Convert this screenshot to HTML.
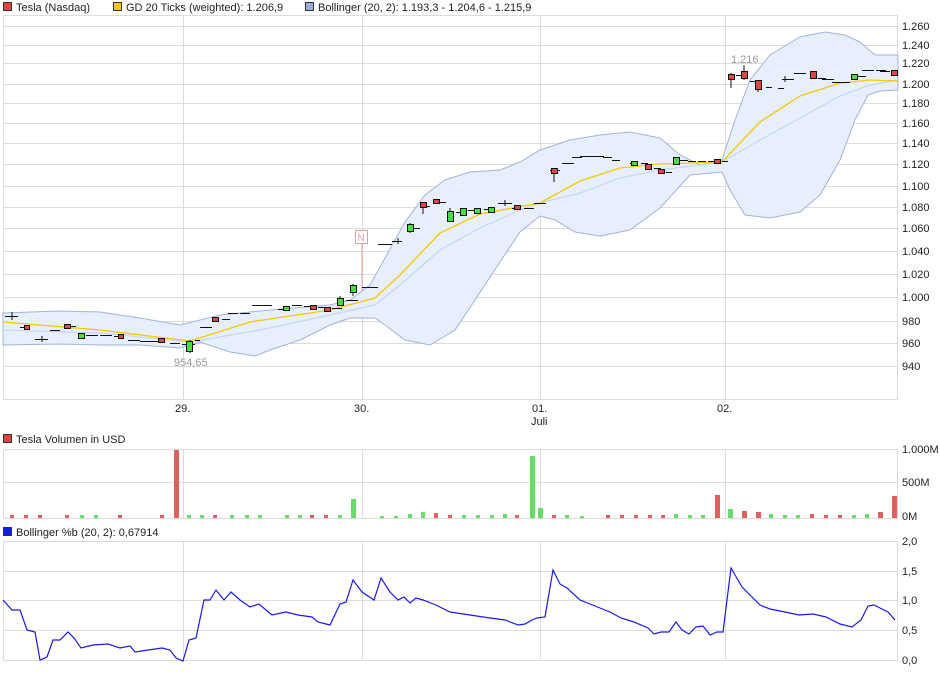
<!DOCTYPE html>
<html><head><meta charset="utf-8"><style>
body{margin:0;background:#fff;width:940px;height:670px;overflow:hidden;font-family:"Liberation Sans",sans-serif}
svg text{font-family:"Liberation Sans",sans-serif;font-size:11px;fill:#222}
</style></head><body>
<svg width="940" height="670" xmlns="http://www.w3.org/2000/svg">
<rect x="3.5" y="2.5" width="8" height="8" fill="#e04545" stroke="#333"/><text x="16" y="11">Tesla (Nasdaq)</text>
<rect x="113.5" y="2.5" width="8" height="8" fill="#f5c800" stroke="#333"/><text x="126" y="11">GD 20 Ticks (weighted): 1.206,9</text>
<rect x="305.5" y="2.5" width="8" height="8" fill="#97aedd" stroke="#333"/><text x="318" y="11">Bollinger (20, 2): 1.193,3 - 1.204,6 - 1.215,9</text>
<g stroke="#dcdcdc" stroke-width="1" fill="none">
<path d="M3 26.5H898M3 45.5H898M3 63.5H898M3 84.5H898M3 103.5H898M3 123.5H898M3 143.5H898M3 164.5H898M3 186.5H898M3 207.5H898M3 228.5H898M3 251.5H898M3 274.5H898M3 297.5H898M3 321.5H898M3 343.5H898M3 366.5H898"/>
<path d="M183.5 15V400M362.5 15V400M540.5 15V400M725.5 15V400"/>
<rect x="3.5" y="15.5" width="894" height="384"/>
</g>
<path d="M3 313 L60 311 L100 312 L140 318 L180 325 L220 315 L270 310 L330 305 L350 300 L370 285 L385 258 L405 222 L425 195 L445 180 L470 172 L500 170 L520 162 L540 150 L570 140 L600 135 L630 132 L660 138 L680 155 L700 165 L722 160 L735 120 L750 80 L770 55 L800 37 L825 32 L845 35 L860 42 L875 55 L898 55 L898 90 L880 91 L868 95 L855 120 L840 160 L820 195 L800 212 L770 218 L745 215 L730 190 L722 172 L690 175 L660 208 L630 230 L600 236 L575 232 L555 220 L540 216 L520 232 L500 262 L475 300 L455 330 L430 345 L405 340 L385 325 L375 318 L350 318 L330 325 L300 340 L270 350 L255 356 L230 352 L200 342 L180 348 L140 345 L100 345 L60 344 L3 345 Z" fill="#e8effc" stroke="#9fb3de" stroke-width="1"/>
<polyline fill="none" stroke="#c5d6f3" stroke-width="1.2" points="3,330 100,333 190,342 260,330 330,315 375,305 400,285 440,250 480,228 520,210 540,203 580,193 620,178 660,170 722,162 760,140 800,118 840,96 870,85 898,80"/>
<polyline fill="none" stroke="#f5c800" stroke-width="1.3" points="3,322 100,330 190,341 250,322 330,310 375,298 400,275 440,233 480,214 540,203 580,181 620,168 660,164 722,162 760,122 800,96 840,83 870,80 898,81"/>
<line x1="362" y1="244" x2="362" y2="290" stroke="#e0a0a0"/>
<rect x="355.5" y="230.5" width="12" height="13" fill="#fff" stroke="#e0a0a0"/><text x="357.5" y="241" style="fill:#e0a0a0;font-size:10px">N</text>
<text x="731" y="63" style="fill:#999">1.216</text>
<text x="174" y="366" style="fill:#999">954,65</text>
<g stroke="#111" stroke-width="1">
<path d="M5 316.5H18M12 312V320M20 327.5H28M35 339.5H48M42 336V342M50 330.5H60M64 326.5H76M86 335.5H98M100 335.5H112M114 336.5H124M128 340.5H140M140 341.5H150M150 341.5H158M170 343.5H180M182 344.5H195M195 340.5H200M200 327.5H212M222 319.5H230M228 313.5H238M240 313.5H250M252 305.5H262M262 305.5H272M278 309.5H288M292 305.5H302M304 306.5H314M318 307.5H328M332 308.5H342M346 300.5H358M362 287.5H378M378 244.5H392M392 241.5H402M398 238V244M412 228.5H420M420 206.5H430M438 202.5H446M456 212.5H464M468 210.5H474M484 209.5H490M498 203.5H512M505 200V206M512 208.5H518M524 208.5H534M534 203.5H546M550 170.5H560M562 163.5H574M572 157.5H582M580 156.5H594M594 156.5H604M603 157.5H612M612 160.5H620M630 163.5H634M641 163.5H648M654 168.5H661M666 172.5H672M676 160.5H688M688 161.5H696M698 161.5H706M708 161.5H714M722 161.5H728M736 75.5H746M750 81.5H756M766 87.5H772M778 88.5H784M782 79.5H794M785 76V82M794 73.5H806M818 78.5H826M822 79.5H834M832 82.5H842M838 82.5H850M858 76.5H866M862 70.5H874M876 70.5H886M880 71.5H890"/>
<path d="M731 73V88M744 65V80M758 80V92M554 168V182M423 202V214M410 223V233M340 296V306M190 340V353M353 284V296M450 208V222"/>
<g fill="#e04545">
<rect x="24.5" y="325.5" width="5" height="4"/><rect x="64.5" y="324.5" width="6" height="4"/><rect x="118.5" y="334.5" width="5" height="4"/><rect x="158.5" y="338.5" width="6" height="4"/><rect x="212.5" y="317.5" width="6" height="4"/><rect x="310.5" y="305.5" width="6" height="4"/><rect x="324.5" y="307.5" width="6" height="4"/><rect x="420.5" y="202.5" width="6" height="5"/><rect x="433.5" y="199.5" width="6" height="4"/><rect x="514.5" y="205.5" width="6" height="4"/><rect x="551.5" y="168.5" width="6" height="5"/><rect x="645.5" y="164.5" width="6" height="5"/><rect x="658.5" y="169.5" width="6" height="4"/><rect x="714.5" y="159.5" width="6" height="4"/><rect x="728.5" y="74.5" width="6" height="5"/><rect x="741.5" y="71.5" width="6" height="7"/><rect x="755.5" y="80.5" width="6" height="9"/><rect x="810.5" y="71.5" width="6" height="7"/><rect x="891.5" y="70.5" width="6" height="5"/>
</g>
<g fill="#44dd44">
<rect x="78.5" y="333.5" width="6" height="5"/><rect x="186.5" y="341.5" width="6" height="10"/><rect x="283.5" y="306.5" width="6" height="4"/><rect x="337.5" y="298.5" width="6" height="7"/><rect x="350.5" y="285.5" width="6" height="7"/><rect x="407.5" y="224.5" width="6" height="7"/><rect x="447.5" y="211.5" width="6" height="10"/><rect x="460.5" y="208.5" width="6" height="7"/><rect x="474.5" y="208.5" width="6" height="5"/><rect x="488.5" y="207.5" width="6" height="5"/><rect x="631.5" y="161.5" width="6" height="4"/><rect x="673.5" y="157.5" width="6" height="7"/><rect x="851.5" y="74.5" width="6" height="5"/>
</g>
</g>
<g>
<text x="902" y="30">1.260</text><text x="902" y="49">1.240</text><text x="902" y="67">1.220</text><text x="902" y="88">1.200</text><text x="902" y="107">1.180</text><text x="902" y="127">1.160</text><text x="902" y="147">1.140</text><text x="902" y="168">1.120</text><text x="902" y="190">1.100</text><text x="902" y="211">1.080</text><text x="902" y="232">1.060</text><text x="902" y="255">1.040</text><text x="902" y="278">1.020</text><text x="902" y="301">1.000</text><text x="902" y="325">980</text><text x="902" y="347">960</text><text x="902" y="370">940</text>
</g>
<text x="175" y="412">29.</text><text x="354" y="412">30.</text><text x="532" y="412">01.</text><text x="531" y="425">Juli</text><text x="717" y="412">02.</text>
<rect x="3.5" y="434.5" width="8" height="8" fill="#e04545" stroke="#333"/><text x="16" y="443">Tesla Volumen in USD</text>
<g stroke="#dcdcdc" fill="none"><path d="M3 449.5H898M3 482.5H898M183.5 449V518M362.5 449V518M540.5 449V518M725.5 449V518"/><path d="M3.5 449V518.5H897.5V449"/></g>
<text x="902" y="453">1.000M</text><text x="902" y="486">500M</text><text x="902" y="520">0M</text>
<g fill="#e06060">
<rect x="10" y="515" width="4" height="3"/><rect x="24" y="515" width="4" height="3"/><rect x="38" y="515" width="4" height="3"/><rect x="65" y="515" width="4" height="3"/><rect x="118" y="515" width="4" height="3"/><rect x="160" y="515" width="4" height="3"/><rect x="174" y="450" width="5" height="68"/><rect x="213" y="515" width="4" height="3"/><rect x="310" y="515" width="4" height="3"/><rect x="324" y="515" width="4" height="3"/><rect x="434" y="513" width="4" height="5"/><rect x="448" y="515" width="4" height="3"/><rect x="515" y="515" width="4" height="3"/><rect x="552" y="515" width="4" height="3"/><rect x="606" y="515" width="4" height="3"/><rect x="620" y="515" width="4" height="3"/><rect x="634" y="515" width="4" height="3"/><rect x="648" y="515" width="4" height="3"/><rect x="661" y="515" width="4" height="3"/><rect x="715" y="495" width="5" height="23"/><rect x="742" y="511" width="5" height="7"/><rect x="756" y="512" width="5" height="6"/><rect x="810" y="514" width="4" height="4"/><rect x="824" y="515" width="4" height="3"/><rect x="838" y="515" width="4" height="3"/><rect x="878" y="512" width="5" height="6"/><rect x="892" y="496" width="5" height="22"/>
</g>
<g fill="#66dd66">
<rect x="80" y="515" width="4" height="3"/><rect x="94" y="515" width="4" height="3"/><rect x="187" y="515" width="4" height="3"/><rect x="200" y="515" width="4" height="3"/><rect x="230" y="515" width="4" height="3"/><rect x="245" y="515" width="4" height="3"/><rect x="258" y="515" width="4" height="3"/><rect x="285" y="515" width="4" height="3"/><rect x="298" y="515" width="4" height="3"/><rect x="338" y="515" width="4" height="3"/><rect x="351" y="499" width="5" height="19"/><rect x="380" y="516" width="4" height="2"/><rect x="394" y="516" width="4" height="2"/><rect x="408" y="514" width="4" height="4"/><rect x="421" y="512" width="4" height="6"/><rect x="462" y="515" width="4" height="3"/><rect x="476" y="515" width="4" height="3"/><rect x="490" y="515" width="4" height="3"/><rect x="503" y="514" width="4" height="4"/><rect x="530" y="456" width="5" height="62"/><rect x="538" y="508" width="5" height="10"/><rect x="565" y="515" width="4" height="3"/><rect x="580" y="516" width="4" height="2"/><rect x="674" y="514" width="4" height="4"/><rect x="688" y="515" width="4" height="3"/><rect x="701" y="515" width="4" height="3"/><rect x="728" y="509" width="5" height="9"/><rect x="769" y="514" width="4" height="4"/><rect x="783" y="515" width="4" height="3"/><rect x="796" y="515" width="4" height="3"/><rect x="852" y="515" width="4" height="3"/><rect x="865" y="514" width="4" height="4"/>
</g>
<rect x="3.5" y="527.5" width="8" height="8" fill="#1020e0" stroke="#333"/><text x="16" y="536">Bollinger %b (20, 2): 0,67914</text>
<g stroke="#dcdcdc" fill="none"><path d="M3 541.5H898M3 571.5H898M3 600.5H898M3 630.5H898M3 660.5H898M183.5 541V660M362.5 541V660M540.5 541V660M725.5 541V660M3.5 541V660M897.5 541V660"/></g>
<text x="902" y="545">2,0</text><text x="902" y="575">1,5</text><text x="902" y="604">1,0</text><text x="902" y="634">0,5</text><text x="902" y="664">0,0</text>
<polyline fill="none" stroke="#1a1aee" stroke-width="1.2" points="3,600 12,610 20,610 27,630 35,632 40,660 47,657 53,640 60,640 68,632 74,638 81,648 93,645 108,644 120,648 130,646 135,652 148,650 162,648 170,650 176,658 183,661 189,640 196,638 204,600 210,600 216,590 224,600 231,592 240,600 250,607 259,604 266,610 272,615 286,612 298,615 312,617 318,622 330,625 340,604 346,602 353,580 362,592 374,600 381,578 390,592 398,600 404,597 410,603 416,598 423,600 436,605 450,612 470,615 490,618 505,620 518,625 525,624 532,620 537,618 545,617 553,570 560,584 567,588 580,600 595,606 610,612 621,618 634,622 648,628 654,634 661,632 669,632 676,622 682,630 689,634 696,627 703,626 710,635 717,632 723,632 731,568 742,587 750,595 760,605 770,609 785,612 799,615 813,614 826,617 840,624 852,627 861,620 868,606 874,605 880,608 888,612 895,620"/>
</svg>
</body></html>
